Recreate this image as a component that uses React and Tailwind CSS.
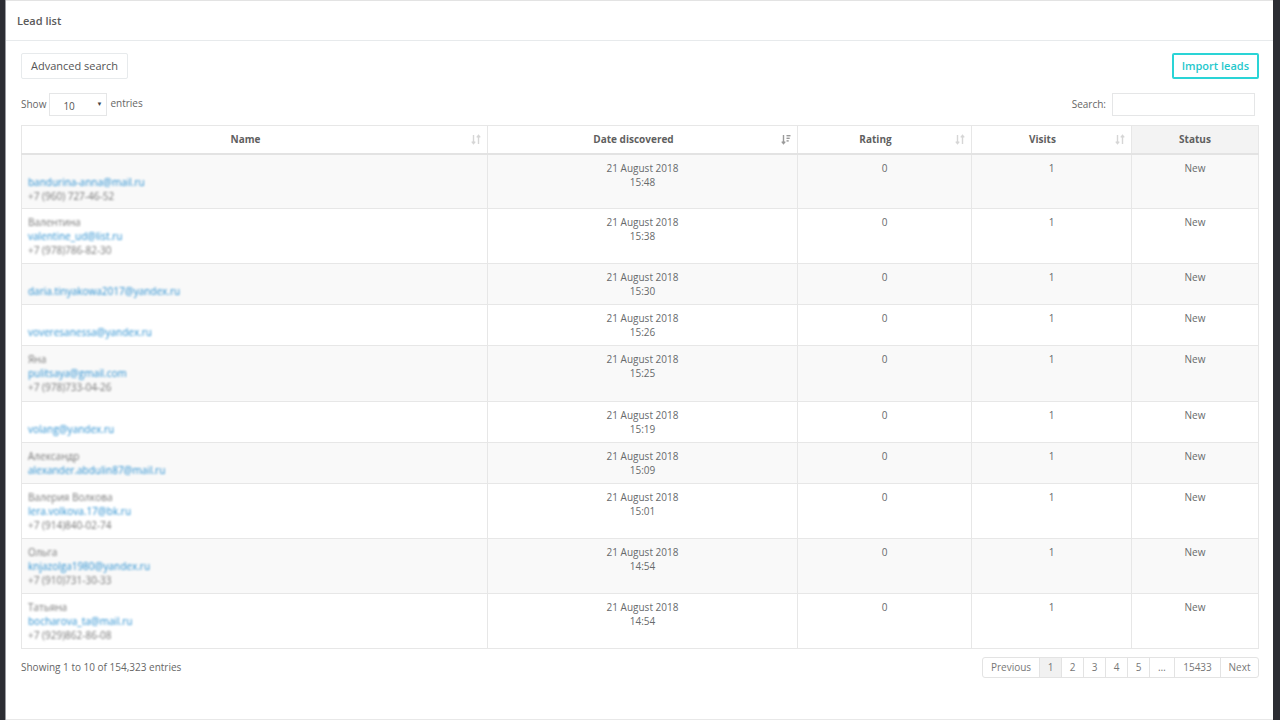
import React from "react";

const rows = [
  { name: "", email: "bandurina-anna@mail.ru", phone: "+7 (960) 727-46-52", time: "15:48", h: "h-[55px]" },
  { name: "Валентина", email: "valentine_ud@list.ru", phone: "+7 (978)786-82-30", time: "15:38", h: "h-[55px]" },
  { name: "", email: "daria.tinyakowa2017@yandex.ru", phone: "", time: "15:30", h: "h-[41px]" },
  { name: "", email: "voveresanessa@yandex.ru", phone: "", time: "15:26", h: "h-[41px]" },
  { name: "Яна", email: "pulitsaya@gmail.com", phone: "+7 (978)733-04-26", time: "15:25", h: "h-[56px]" },
  { name: "", email: "volang@yandex.ru", phone: "", time: "15:19", h: "h-[41px]" },
  { name: "Александр", email: "alexander.abdulin87@mail.ru", phone: "", time: "15:09", h: "h-[41px]" },
  { name: "Валерия Волкова", email: "lera.volkova.17@bk.ru", phone: "+7 (914)840-02-74", time: "15:01", h: "h-[55px]" },
  { name: "Ольга", email: "knjazolga1980@yandex.ru", phone: "+7 (910)731-30-33", time: "14:54", h: "h-[55px]" },
  { name: "Татьяна", email: "bocharova_ta@mail.ru", phone: "+7 (929)862-86-08", time: "14:54", h: "h-[55px]" },
];

function SortIcon({ active }) {
  const c = active ? "#9a9a9a" : "#d6d6d6";
  return (
    <svg width="10" height="11" viewBox="0 0 10 11" className="absolute right-[6px] top-[8px]">
      <path d="M2.5 1 V9.5 M0.8 7.6 L2.5 9.6 L4.2 7.6" stroke={c} strokeWidth="1.4" fill="none" />
      {active ? (
        <g fill={c}>
          <rect x="5.5" y="1" width="4" height="1.4" />
          <rect x="5.5" y="3.6" width="3.2" height="1.4" />
          <rect x="5.5" y="6.2" width="2.2" height="1.4" />
        </g>
      ) : (
        <path d="M7.5 10 V1.5 M5.8 3.4 L7.5 1.4 L9.2 3.4" stroke={c} strokeWidth="1.4" fill="none" />
      )}
    </svg>
  );
}

export default function App() {
  const font = { fontFamily: '"Open Sans", "Noto Sans", sans-serif' };
  return (
    <div className="w-full h-[720px] bg-[#2c2d33] flex" style={font}>
      <div className="w-[5px] shrink-0" />
      <div className="w-[1px] bg-[#9a9ba0] shrink-0" />
      <div className="flex-1 bg-white flex flex-col border-t border-t-[#e3e3e3] border-b border-b-[#e8e8e8] text-[#676a6c]">
        <div className="h-[40px] border-b border-[#e7eaec] pl-[11px] pt-[2px] flex items-center shrink-0">
          <span className="text-[11px] font-semibold text-[#5a5a5a]">Lead list</span>
        </div>
        <div className="pl-[15px] pr-[14px] pt-[12px] flex flex-col">
          <div className="flex justify-between items-center h-[26px]">
            <button className="h-[26px] px-[9px] border border-[#e7eaec] rounded-[2px] text-[11px] text-[#555] bg-white">
              Advanced search
            </button>
            <button className="h-[26px] px-[8px] border-2 border-[#2ad4d6] rounded-[2px] text-[11px] font-semibold text-[#1fc8cc] bg-white">
              Import leads
            </button>
          </div>
          <div className="flex justify-between items-center mt-[14px] h-[23px]">
            <div className="flex items-center text-[10px] text-[#666]">
              <span>Show</span>
              <div className="ml-[3px] mr-[3px] w-[58px] h-[23px] border border-[#e5e6e7] flex items-center justify-between pl-[13px] pr-[4px] pt-[3px]">
                <span className="text-[10px] text-[#555]">10</span>
                <span className="text-[6px] text-[#444] -mt-[3px]">▼</span>
              </div>
              <span className="-mt-[2px]">entries</span>
            </div>
            <div className="flex items-center text-[10px] text-[#666]">
              <span>Search:</span>
              <div className="ml-[6px] mr-[4px] w-[143px] h-[23px] border border-[#e5e6e7]" />
            </div>
          </div>
          <table className="mt-[9px] w-[1237px] table-fixed border-collapse text-[10px] text-[#676a6c]">
            <colgroup>
              <col className="w-[466px]" />
              <col className="w-[310px]" />
              <col className="w-[174px]" />
              <col className="w-[160px]" />
              <col className="w-[127px]" />
            </colgroup>
            <thead>
              <tr className="h-[28px]">
                {["Name", "Date discovered", "Rating", "Visits"].map((h, i) => (
                  <th key={h} className="relative border border-[#e7e7e7] border-b-2 border-b-[#e3e3e3] font-bold text-[10px] text-[#5f5f5f] text-center align-middle pl-[4px] pr-[22px]">
                    {h}
                    <SortIcon active={i === 1} />
                  </th>
                ))}
                <th className="border border-[#e7e7e7] border-b-2 border-b-[#e3e3e3] bg-[#f3f3f3] font-bold text-[10px] text-[#5f5f5f] text-center">
                  Status
                </th>
              </tr>
            </thead>
            <tbody>
              {rows.map((r, i) => (
                <tr key={i} className={`${r.h} ${i % 2 === 0 ? "bg-[#f9f9f9]" : "bg-white"}`}>
                  <td className="border border-[#e7e7e7] align-top px-[6px] pt-[6px] leading-[14px]">
                    <div className="blur-[1.3px]">
                      <div className="h-[14px] text-[#777]">{r.name}</div>
                      <div className="text-[#2a8fd0]">{r.email}</div>
                      {r.phone && <div className="text-[#777]">{r.phone}</div>}
                    </div>
                  </td>
                  <td className="border border-[#e7e7e7] align-top text-center pt-[6px] leading-[14px]">
                    <div>21 August 2018</div>
                    <div>{r.time}</div>
                  </td>
                  <td className="border border-[#e7e7e7] align-top text-center pt-[6px] leading-[14px]">0</td>
                  <td className="border border-[#e7e7e7] align-top text-center pt-[6px] leading-[14px]">1</td>
                  <td className="border border-[#e7e7e7] align-top text-center pt-[6px] leading-[14px]">New</td>
                </tr>
              ))}
            </tbody>
          </table>
          <div className="flex justify-between items-center mt-[8px] h-[21px]">
            <span className="text-[10px] text-[#666]">Showing 1 to 10 of 154,323 entries</span>
            <div className="flex h-[21px] border border-[#e3e3e3] rounded-[3px] text-[10px] text-[#777]">
              {[
                ["Previous", "w-[56px]"],
                ["1", "w-[22px] bg-[#f1f1f1]"],
                ["2", "w-[22px]"],
                ["3", "w-[22px]"],
                ["4", "w-[22px]"],
                ["5", "w-[22px]"],
                ["…", "w-[25px]"],
                ["15433", "w-[46px]"],
                ["Next", "w-[38px]"],
              ].map(([t, c], i) => (
                <div key={t} className={`${c} flex items-center justify-center ${i > 0 ? "border-l border-[#e3e3e3]" : ""}`}>
                  {t}
                </div>
              ))}
            </div>
          </div>
        </div>
      </div>
      <div className="w-[8px] shrink-0" />
    </div>
  );
}
